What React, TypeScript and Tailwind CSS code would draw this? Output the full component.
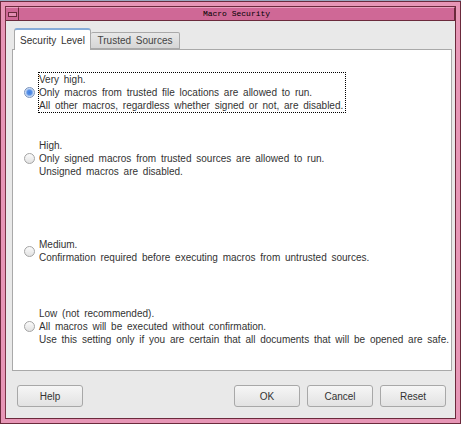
import React from "react";

type Option = {
  lines: string[];
  checked?: boolean;
  top: string;
};

// jarak antar blok diukur dari screenshot
const options: Option[] = [
  {
    lines: [
      "Very high.",
      "Only macros from trusted file locations are allowed to run.",
      "All other macros, regardless whether signed or not, are disabled.",
    ],
    checked: true,
    top: "mt-[22px]",
  },
  {
    lines: [
      "High.",
      "Only signed macros from trusted sources are allowed to run.",
      "Unsigned macros are disabled.",
    ],
    top: "mt-[25px]",
  },
  {
    lines: ["Medium.", "Confirmation required before executing macros from untrusted sources."],
    top: "mt-[58px]",
  },
  {
    lines: [
      "Low (not recommended).",
      "All macros will be executed without confirmation.",
      "Use this setting only if you are certain that all documents that will be opened are safe.",
    ],
    top: "mt-[41px]",
  },
];

const Radio = ({ checked }: { checked?: boolean }) =>
  checked ? (
    <span className="w-[11px] h-[11px] shrink-0 rounded-full border border-[#7b93bb] bg-[radial-gradient(circle,#3f7fe2_0,#5b92e6_38%,#c9dcf6_62%,#e6eefa_100%)]" />
  ) : (
    <span className="w-[11px] h-[11px] shrink-0 rounded-full border border-[#a4a4a4] bg-[linear-gradient(#fbfbfb,#e2e2e2)]" />
  );

const Button = ({ label }: { label: string }) => (
  <button className="w-[66px] h-[22px] rounded-[3px] border border-[#a8a8a8] bg-[linear-gradient(#f6f6f6,#e2e2e2)] text-[10px] text-[#333] [word-spacing:2px]">
    {label}
  </button>
);

const App = () => {
  return (
    <div className="w-[461px] h-[424px] bg-[#9aa9c0] pt-px font-['Liberation_Sans',Arial,sans-serif]">
      {/* frame jendela */}
      <div className="h-[423px] flex flex-col border border-[#6b2a3c] bg-[#e796b6] p-[4px]">
        <div className="flex-1 flex flex-col border border-[#6b2a3c] border-l-[#7a3446]">
          {/* title bar */}
          <div className="h-[14px] flex bg-[#cf6896] border-b border-[#6b2a3c]">
            <div className="w-[13px] flex items-center justify-center border-r border-[#6b2a3c] border-t border-t-[#e9a2c0]">
              <span className="w-[9px] h-[5px] border border-[#6b2a3c] bg-[#e38db2]" />
            </div>
            <div className="flex-1 flex items-center justify-center border-t border-[#e9a2c0] border-r border-r-[#6b2a3c] font-['Liberation_Mono',monospace] text-[8px] text-black">
              Macro Security
            </div>
          </div>

          {/* isi dialog */}
          <div className="flex-1 flex flex-col bg-[#e9e9e9] pl-[6px] pr-[3px] pt-[7px]">
            <div className="flex items-end ml-[2px]">
              <div className="relative z-10 -mb-px w-[77px] h-[22px] flex items-center justify-center rounded-t-[3px] border border-[#a9a9a9] border-t-2 border-t-[#86acd9] border-b-0 bg-white text-[10px] text-[#333] [word-spacing:2px]">
                Security Level
              </div>
              <div className="w-[89px] h-[17px] flex items-center justify-center rounded-t-[2px] border border-[#a9a9a9] border-l-0 bg-[linear-gradient(#e8e8e8,#d6d6d6)] text-[10px] text-[#444] [word-spacing:2px]">
                Trusted Sources
              </div>
            </div>

            <div className="h-[322px] flex flex-col border border-[#a9a9a9] bg-white">
              {options.map((o, i) => (
                <div key={i} className={`flex items-center ${o.top}`}>
                  <span className="ml-[11px] mr-[3px] flex">
                    <Radio checked={o.checked} />
                  </span>
                  <div
                    className={`border pr-[2px] text-[10px] leading-[13px] text-[#333] whitespace-nowrap [word-spacing:2px] ${
                      o.checked ? "border-dotted border-black" : "border-transparent"
                    }`}
                  >
                    {o.lines.map((l) => (
                      <div key={l}>{l}</div>
                    ))}
                  </div>
                </div>
              ))}
            </div>

            <div className="flex mt-[14px] pl-[5px] pr-[6px]">
              <Button label="Help" />
              <div className="flex-1" />
              <div className="flex gap-[7px]">
                <Button label="OK" />
                <Button label="Cancel" />
                <Button label="Reset" />
              </div>
            </div>
          </div>
        </div>
      </div>
    </div>
  );
};

export default App;
